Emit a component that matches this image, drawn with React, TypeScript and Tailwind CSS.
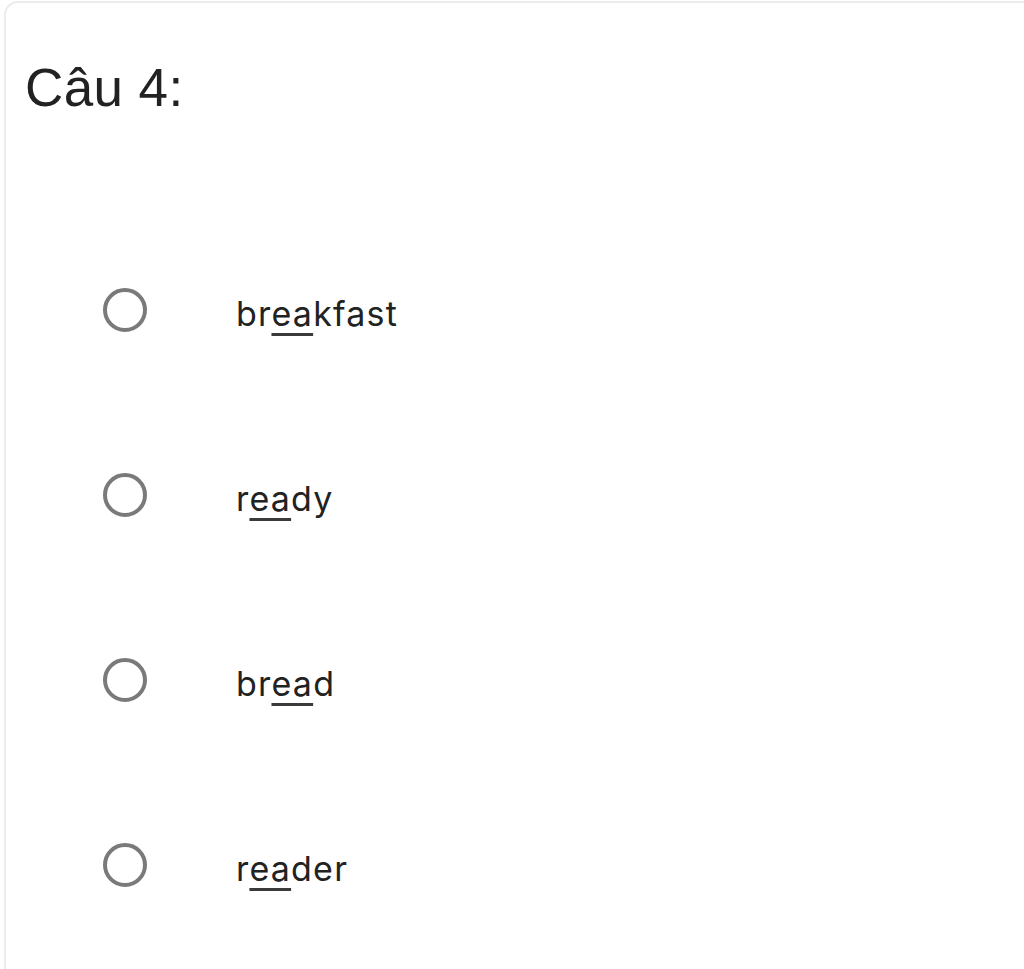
import React from "react";

const options: { pre: string; u: string; post: string }[] = [
  { pre: "br", u: "ea", post: "kfast" },
  { pre: "r", u: "ea", post: "dy" },
  { pre: "br", u: "ea", post: "d" },
  { pre: "r", u: "ea", post: "der" },
];

export default function App() {
  return (
    <div className="w-[1024px] h-[969px] overflow-hidden bg-white">
      <div className="ml-[4px] mt-[1px] w-[1100px] h-[1000px] border-t-2 border-l-2 border-[#ececec] rounded-tl-[14px] bg-white">
        <div
          className="pl-[19px] pt-[53px] text-[53px] leading-[1.2] tracking-[0.4px] text-[#222222]"
          style={{ fontFamily: '"Liberation Sans", Arial, sans-serif' }}
        >
          Câu 4:
        </div>
        <div className="mt-[98px] flex flex-col">
          {options.map((o, i) => (
            <div key={i} className="h-[185px] flex items-center">
              <div className="ml-[97px] w-[44px] h-[44px] rounded-full border-[4px] border-[#7a7a7a] shrink-0" />
              <div
                className="ml-[89px] mt-[7px] text-[34px] tracking-[1.2px] text-[#222222]"
                style={{ fontFamily: 'Inter, "Liberation Sans", sans-serif' }}
              >
                {o.pre}
                <span className="underline decoration-[3px] underline-offset-[7px] decoration-[#3a3a3a]">{o.u}</span>
                {o.post}
              </div>
            </div>
          ))}
        </div>
      </div>
    </div>
  );
}
